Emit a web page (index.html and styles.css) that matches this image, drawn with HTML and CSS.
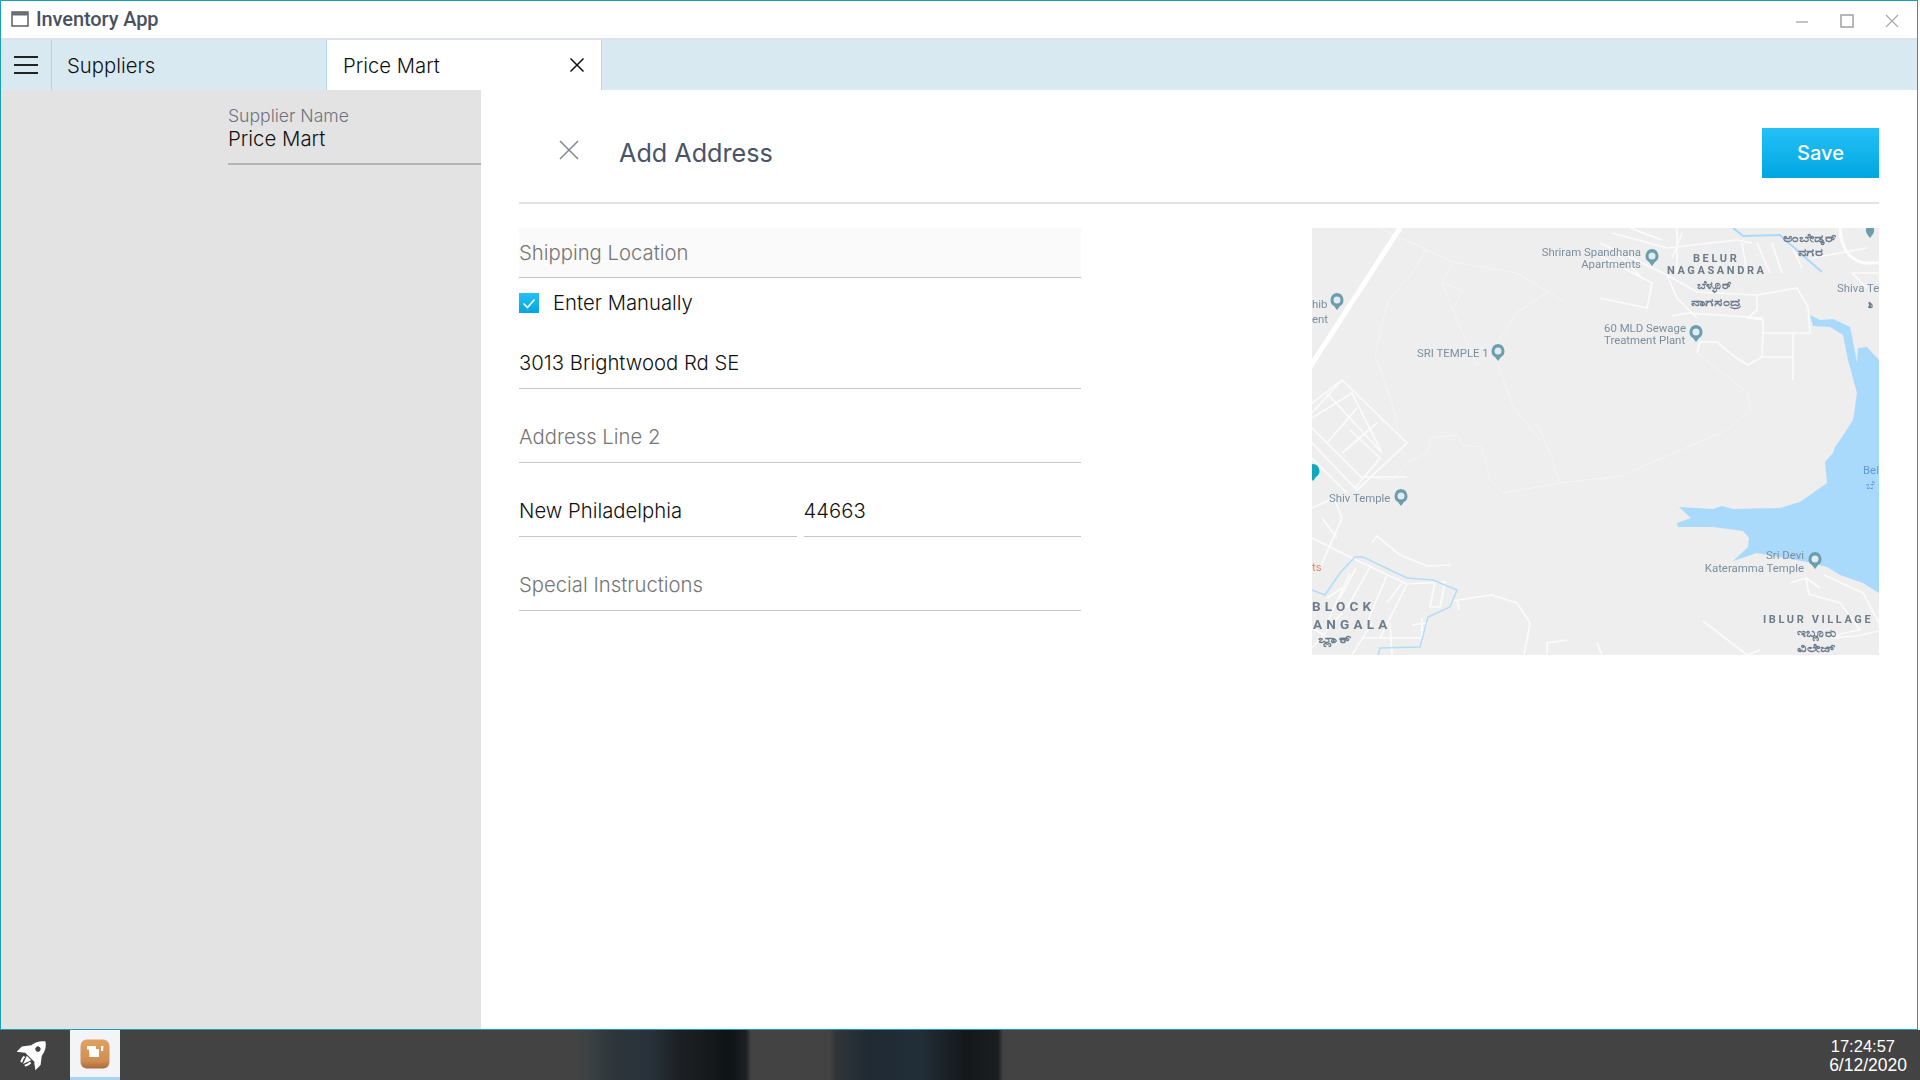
FILE: index.html
```html
<!DOCTYPE html>
<html lang="en">
<head>
<meta charset="utf-8">
<title>Inventory App</title>
<link rel="stylesheet" href="styles.css">
</head>
<body>
<div class="window">
  <header class="titlebar">
    <div class="title-left">
      <svg class="win-icon" width="18" height="16" viewBox="0 0 18 16"><rect x="1" y="1" width="16" height="14" fill="#fff" stroke="#50555c" stroke-width="1.4"/><rect x="1" y="1" width="16" height="3.500" fill="#6a6f76"/></svg>
      <span class="app-title">Inventory App</span>
    </div>
    <div class="win-controls">
      <svg width="14" height="14" viewBox="0 0 14 14"><path d="M1 8h12" stroke="#a9a9a9" stroke-width="1.4"/></svg>
      <svg width="14" height="14" viewBox="0 0 14 14"><rect x="1" y="1" width="12" height="12" fill="none" stroke="#a0a0a0" stroke-width="1.5"/></svg>
      <svg width="14" height="14" viewBox="0 0 14 14"><path d="M1 1l12 12M13 1L1 13" stroke="#a9a9a9" stroke-width="1.2"/></svg>
    </div>
  </header>
  <nav class="tabbar">
    <div class="menu-btn">
      <svg width="26" height="20" viewBox="0 0 26 20"><path d="M1 2h24M1 10h24M1 18h24" stroke="#222" stroke-width="2"/></svg>
    </div>
    <div class="tab">Suppliers</div>
    <div class="tab tab-active">
      <span>Price Mart</span>
      <svg width="16" height="16" viewBox="0 0 16 16"><path d="M1.500 1.500l13 13M14.500 1.500l-13 13" stroke="#111" stroke-width="1.500"/></svg>
    </div>
  </nav>
  <main class="content">
    <aside class="side">
      <div class="side-field">
        <div class="side-label">Supplier Name</div>
        <div class="side-value">Price Mart</div>
      </div>
    </aside>
    <section class="panel">
      <div class="panel-head">
        <div class="panel-title-group">
          <svg class="panel-close" width="20" height="20" viewBox="0 0 20 20"><path d="M1 1l18 18M19 1L1 19" stroke="#7f8794" stroke-width="1.5"/></svg>
          <h1 class="panel-title">Add Address</h1>
        </div>
        <button class="save">Save</button>
      </div>
      <div class="panel-body">
        <form class="form">
          <div class="field field-search placeholder">Shipping Location</div>
          <div class="check-row">
            <span class="checkbox"><svg width="20" height="20" viewBox="0 0 20 20"><path d="M4.500 10.500l4 4 7-8" fill="none" stroke="#fff" stroke-width="1.700"/></svg></span>
            <span>Enter Manually</span>
          </div>
          <div class="field">3013 Brightwood Rd SE</div>
          <div class="field placeholder">Address Line 2</div>
          <div class="field-row">
            <div class="field">New Philadelphia</div>
            <div class="field">44663</div>
          </div>
          <div class="field placeholder">Special Instructions</div>
        </form>
        <div class="map">
          <svg width="567" height="427" viewBox="0 0 567 427">
            <rect width="567" height="427" fill="#efeeee"/>
            <g fill="none" stroke="#f5f5f5" stroke-width="1">
              <path d="M68 0L141 34 205 45 236 64 255 75M141 34L130 55 141 82 165 137 181 122 205 84 236 64M130 55L150 62 141 82M181 122L201 179 228 212M63 127L76 72 100 45 115 20M63 127L80 175 88 212"/>
              <path d="M298 249L248 255 191 265 178 252 170 219 151 217 145 207 118 210 115 225 95 235 80 252 51 249"/>
              <path d="M248 255L240 230 225 195"/>
              <path d="M385 125L436 165 438 182 415 202 311 247 288 252"/>
            </g>
            <g fill="none" stroke="#fbfbfb" stroke-width="1.700">
              <path d="M288 15L355 47 385 64 445 67 485 60 496 79 498 105 451 105 450 129 481 129 481 105M481 129V152M450 129L436 137 423 129 405 114 388 114 385 125"/>
              <path d="M445 67V82L436 90 451 92 451 105M376 85L451 90M355 47L365 70 385 90M360 88L376 85M365 0V45M288 28L340 55 335 80 288 70M300 5L355 20 425 12 440 15M430 15L435 45M445 15L458 45M460 15L470 45M478 15L490 40"/>
              <path d="M300 20L330 50M318 0L350 12M370 5L360 30"/>
              <path d="M0 190L40 165 70 225M0 175L30 152 95 215 45 262 0 215M15 165L70 225M30 152L0 185M45 180L15 215M65 195L30 225M0 200L50 250M0 230L35 265M38 202L68 230 43 260M50 249H95"/>
              <path d="M0 310L44 332 95 356 133 354 128 379 118 379 123 354M95 356L68 410M60 315L65 308 88 327 115 338 139 337M44 340L28 370M58 339L35 380M75 347L55 395M90 355L75 375M30 360L15 370M38 345L15 395M30 385L0 420M50 410H110L115 395 100 397M110 410V390M40 427L60 395M80 427L78 395M0 400L25 415M0 280L22 270 30 290 8 340M10 290L25 310"/>
              <path d="M139 373L180 367 205 375 218 395 212 427M145 372L147 382M235 427L235 415 255 412M285 415L290 427"/>
              <path d="M478 355L494 350 497 366 528 375 548 402 532 405 519 410 545 408 567 403M494 350L508 360M512 347L551 365 567 395M391 393L435 427 448 422"/>
              <path d="M528 0V10M500 30L555 20"/>
            </g>
            <path d="M528 0C530 20 535 30 551 35H567" fill="none" stroke="#fcfcfc" stroke-width="3"/>
            <path d="M540 45H567M540 45L555 60" fill="none" stroke="#fbfbfb" stroke-width="1.500"/>
            <path d="M88 0L-2 139" fill="none" stroke="#fff" stroke-width="5"/>
            <path fill="#a9d9fb" d="M498 87L508 92 521 91 538 99 540 108 545 135 546 120 555 119 567 132V365L551 355 528 347 515 339 495 334 445 325 421 333 436 319 437 310 431 303 401 299 388 299 366 299 365 295 379 290 367 279 401 281 410 278 421 281 468 280 488 274 515 255 513 234 521 225 523 219 528 212 541 192 545 165 536 132 531 107 518 99 501 98Z"/>
            <path d="M421 0L431 8 468 7 488 25 510 44" fill="none" stroke="#a9d9fb" stroke-width="2.200"/>
            <path d="M0 362L13 367 28 345 43 329 51 329 95 350 121 352 145 362 138 379 116 389 108 419 68 420 66 427" fill="none" stroke="#b3dcf6" stroke-width="1.500"/>
            <g class="pins">
              <path d="M25 65a7 7 0 0 1 3 13l-3 4-3-4a7 7 0 0 1 3-13z"/>
              <path d="M186 116a7 7 0 0 1 3 13l-3 4-3-4a7 7 0 0 1 3-13z"/>
              <path d="M340 21a7 7 0 0 1 3 13l-3 4-3-4a7 7 0 0 1 3-13z"/>
              <path d="M384 97a7 7 0 0 1 3 13l-3 4-3-4a7 7 0 0 1 3-13z"/>
              <path d="M89 261a7 7 0 0 1 3 13l-3 4-3-4a7 7 0 0 1 3-13z"/>
              <path d="M503 324a7 7 0 0 1 3 13l-3 4-3-4a7 7 0 0 1 3-13z"/>
              <path d="M558 -4a7 7 0 0 1 3 10l-3 4-3-4a7 7 0 0 1 3-10z"/>
            </g>
            <g fill="#e0ecf0">
              <circle cx="25" cy="72" r="3.500"/><circle cx="186" cy="123" r="3.500"/><circle cx="340" cy="28" r="3.500"/><circle cx="384" cy="104" r="3.500"/><circle cx="89" cy="268" r="3.500"/><circle cx="503" cy="331" r="3.500"/>
            </g>
            <path d="M1 236a7 7 0 0 1 3 13l-3 4-3-4a7 7 0 0 1 3-13z" fill="#11a9b8"/>
            <g class="lbl">
              <text x="0" y="80">hib</text>
              <text x="0" y="95">ent</text>
              <text x="105" y="129">SRI TEMPLE 1</text>
              <text x="329" y="28" text-anchor="end">Shriram Spandhana</text>
              <text x="329" y="40" text-anchor="end">Apartments</text>
              <text x="292" y="104">60 MLD Sewage</text>
              <text x="292" y="116">Treatment Plant</text>
              <text x="525" y="64">Shiva Te</text>
              <text x="17" y="274">Shiv Temple</text>
              <text x="492" y="331" text-anchor="end">Sri Devi</text>
              <text x="492" y="344" text-anchor="end">Kateramma Temple</text>
            </g>
            <g class="area">
              <text x="381" y="34" class="a1">BELUR</text>
              <text x="355" y="46" class="a1">NAGASANDRA</text>
              <text x="451" y="395" class="a2">IBLUR VILLAGE</text>
              <text x="0" y="383" class="a3">BLOCK</text>
              <text x="1" y="401" class="a3">ANGALA</text>
            </g>
            <g class="kn">
              <text x="471" y="14" textLength="55" lengthAdjust="spacingAndGlyphs">ಅಂಬೇಡ್ಕರ್</text>
              <text x="486" y="28" textLength="25" lengthAdjust="spacingAndGlyphs">ನಗರ</text>
              <text x="385" y="61" textLength="36" lengthAdjust="spacingAndGlyphs">ಬೆಳ್ಳೂರ್</text>
              <text x="379" y="78" textLength="49" lengthAdjust="spacingAndGlyphs">ನಾಗಸಂದ್ರ</text>
              <text x="556" y="80" class="kn-small">ಶಿ</text>
              <text x="6" y="415" textLength="35" lengthAdjust="spacingAndGlyphs">ಬ್ಲಾಕ್</text>
              <text x="485" y="409" textLength="40" lengthAdjust="spacingAndGlyphs">ಇಬ್ಲೂರು</text>
              <text x="485" y="424" textLength="38" lengthAdjust="spacingAndGlyphs">ವಿಲೇಜ್</text>
            </g>
            <text x="0" y="343" class="orange">ts</text>
            <text x="551" y="246" class="lake">Bel</text>
            <text x="554" y="261" class="lake">ಬೆ</text>
          </svg>
        </div>
      </div>
    </section>
  </main>
</div>
<footer class="taskbar">
  <div class="task-left">
    <div class="task-rocket">
      <svg width="36" height="36" viewBox="0 0 34 34"><g transform="rotate(45 17 17)"><path fill="#fff" d="M17 -1C23 3 25 10 24.500 20H9.500C9 10 11 3 17 -1z"/><path fill="#fff" d="M10 11L4.500 18V25L10.500 20.500zM24 11L29.500 18V25L23.500 20.500z"/><path fill="none" stroke="#fff" stroke-width="2" d="M13 23C12.500 26 14 27 14.500 29M21 23C21.500 26 20 27 19.500 29"/><path fill="#fff" d="M14 21H20L17 29z"/><circle cx="17" cy="9" r="2.500" fill="#444"/></g></svg>
    </div>
    <div class="task-app">
      <svg width="30" height="30" viewBox="0 0 30 30"><defs><linearGradient id="appg" x1="0" y1="0" x2="0" y2="1"><stop offset="0" stop-color="#e0a163"/><stop offset=".75" stop-color="#cf8d52"/><stop offset="1" stop-color="#a9693a"/></linearGradient></defs><path fill="url(#appg)" d="M8 .5h14c5 0 7.500 2.500 7.500 7.500v14c0 5-2.500 7.500-7.500 7.500H8c-5 0-7.500-2.500-7.500-7.500V8C.5 3 3 .5 8 .5z"/><path fill="#fff" d="M7 7h9v3h3v8H9.500L9 10.500H7z"/><path fill="#fff" d="M21 7h2.500l-.5 5h-2z"/></svg>
    </div>
  </div>
  <div class="clock"><div class="time">17:24:57</div><div class="date">6/12/2020</div></div>
</footer>
</body>
</html>
```
FILE: styles.css
```css
* { box-sizing: border-box; }
html, body { margin: 0; height: 100%; }
body {
  width: 1920px;
  height: 1080px;
  overflow: hidden;
  background: #fff;
  font-family: "Inter", "Liberation Sans", sans-serif;
  display: flex;
  flex-direction: column;
}
.window {
  width: 1918px;
  height: 1030px;
  border: 1px solid #1a9fb8;
  display: flex;
  flex-direction: column;
  background: #fff;
  flex: none;
}
.titlebar {
  height: 39px;
  border-bottom: 2px solid #dde2e8;
  display: flex;
  align-items: center;
  justify-content: space-between;
  padding: 0 10px 2px 10px;
  flex: none;
}
.title-left { display: flex; align-items: center; gap: 7px; }
.win-icon { display: block; }
.app-title {
  font-family: "Roboto", sans-serif;
  font-size: 20px;
  color: #4a5160;
  font-weight: 500;
  letter-spacing: -.1px;
}
.win-controls { display: flex; align-items: center; gap: 31px; margin-top: 4px; padding-right: 8px; }
.win-controls svg { display: block; }
.tabbar {
  height: 50px;
  background: #d9e9f1;
  display: flex;
  flex: none;
}
.menu-btn {
  width: 51px;
  border-right: 1px solid #b4d6ea;
  display: flex;
  align-items: center;
  justify-content: center;
  padding-right: 1px;
}
.tab {
  width: 275px;
  border-right: 1px solid #b4d6ea;
  display: flex;
  align-items: center;
  justify-content: space-between;
  padding: 0 15px;
  font-size: 20.300px;
  font-weight: 300;
  color: #111;
}
.tab-active { background: #fff; padding: 0 16px; }
.content { flex: 1; display: flex; min-height: 0; }
.side {
  width: 480px;
  background: #e3e3e3;
  padding: 15px 0 0 227px;
  flex: none;
}
.side-field { height: 60px; border-bottom: 2px solid #b5b5b5; }
.side-label { font-size: 17.600px; font-weight: 300; color: #6f7380; line-height: 22px; }
.side-value { font-size: 20.400px; font-weight: 300; color: #111; line-height: 24px; }
.panel { flex: 1; padding: 0 38px; min-width: 0; }
.panel-head {
  height: 114px;
  padding-top: 14px;
  border-bottom: 2px solid #e3e3e3;
  display: flex;
  align-items: center;
  justify-content: space-between;
}
.panel-title-group { display: flex; align-items: center; margin-left: 40px; }
.panel-close { display: block; margin-top: -6px; }
.panel-title { margin: 0 0 0 40px; font-size: 25.200px; font-weight: 400; color: #4a5368; }
.save {
  width: 117px;
  height: 50px;
  border: 0;
  color: #fff;
  font-family: "Inter", sans-serif;
  font-size: 20px;
  font-weight: 500;
  background: linear-gradient(#25c0f7, #00a6e0);
}
.panel-body {
  margin-top: 24px;
  display: flex;
  justify-content: space-between;
  align-items: flex-start;
}
.form { width: 562px; font-size: 20.300px; font-weight: 300; color: #111; display: flex; flex-direction: column; }
.field {
  height: 51px;
  line-height: 50px;
  border-bottom: 1px solid #c6c6c6;
  margin-bottom: 23px;
  white-space: nowrap;
}
.field-search { background: #fafafa; height: 50px; line-height: 49px; margin-bottom: 0; }
.placeholder { color: #757575; }
.check-row {
  height: 60px;
  display: flex;
  gap: 14px;
  padding-top: 15px;
  line-height: 20px;
}
.checkbox {
  width: 20px;
  height: 20px;
  background: linear-gradient(#25c0f7, #00a6e0);
  display: block;
}
.checkbox svg { display: block; }
.field-row { display: flex; gap: 7px; }
.field-row .field { flex: 1; }
.map { width: 567px; height: 427px; flex: none; overflow: hidden; }
.map svg { display: block; filter: blur(.6px); }
.pins path { fill: #6b9dad; }
.lbl text { font-family: "Roboto", sans-serif; font-size: 11.400px; fill: #7b8f9e; }
.a1, .a2, .a3 { font-family: "Roboto", sans-serif; font-weight: 700; fill: #6d7c8b; }
.a1 { font-size: 11px; letter-spacing: 2.600px; }
.a2 { font-size: 11px; letter-spacing: 2.600px; }
.a3 { font-size: 13.500px; letter-spacing: 4.200px; }
.kn text { font-family: "Noto Sans", "DejaVu Sans", sans-serif; font-size: 11px; font-weight: 700; fill: #6d7c8b; }
.kn .kn-small { font-size: 9px; }
.orange { font-family: "Roboto", sans-serif; font-size: 11.400px; fill: #e08b6c; }
.lake { font-family: "Roboto", sans-serif; font-size: 11.400px; fill: #5f9bd8; }
.taskbar {
  height: 50px;
  flex: none;
  display: flex;
  justify-content: space-between;
  background:
    linear-gradient(90deg,
      #434343 576px, #3d4244 586px, #2e363c 612px, #29323a 650px, #1c2024 678px, #181c1f 700px, #0e1315 730px, #1c2022 746px, #434343 751px,
      #434343 829px, #31353a 836px, #1f2a33 870px, #222e38 920px, #14181b 965px, #1b1d1f 998px, #434343 1003px);
}
.task-left { display: flex; }
.task-rocket { width: 70px; display: flex; align-items: center; justify-content: center; padding-right: 7px; }
.task-app {
  width: 50px;
  background: #f3f4f8;
  border-bottom: 3px solid #a9d3f3;
  display: flex;
  align-items: center;
  justify-content: center;
}
.clock {
  font-family: "Liberation Sans", sans-serif;
  color: #fff;
  text-align: right;
  padding: 7px 13px 0 0;
  line-height: 19px;
}
.time { font-size: 16.500px; padding-right: 12px; }
.date { font-size: 17.500px; }
```
